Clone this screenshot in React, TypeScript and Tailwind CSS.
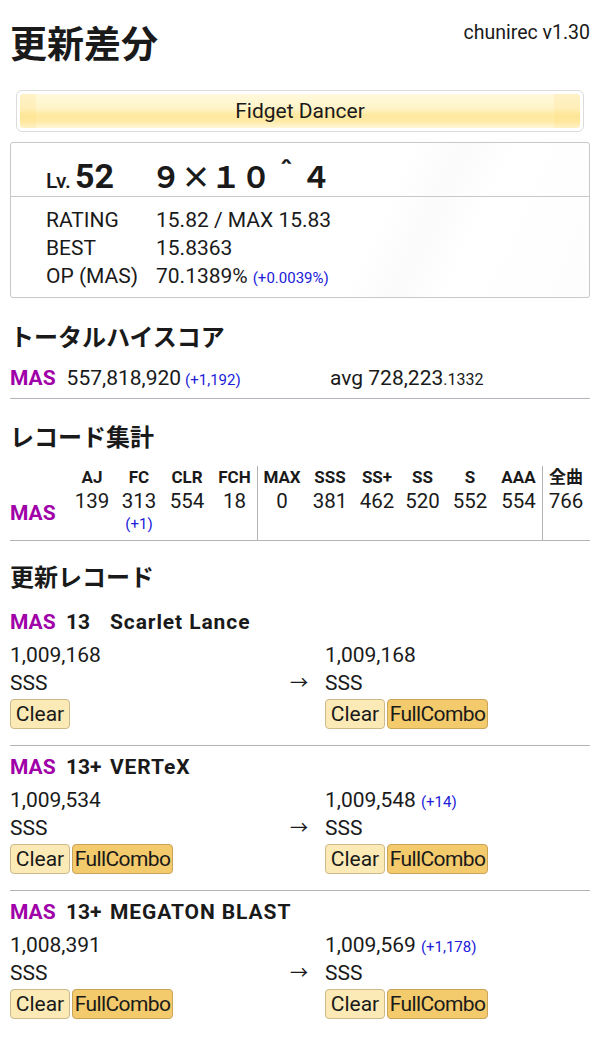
const MAS = "text-[#a000a8]";
const BLUE = "text-[#2020d8]";

function Badge({ kind }: { kind: "Clear" | "FullCombo" }) {
  if (kind === "Clear") {
    return (
      <span className="inline-flex h-[30px] w-[60px] items-center justify-center rounded-[4px] border border-[#cdb98a] bg-[#fbeab6] text-[21px] leading-none">
        Clear
      </span>
    );
  }
  return (
    <span className="inline-flex h-[30px] w-[101px] items-center justify-center rounded-[4px] border border-[#c9a459] bg-[#f3ca6c] text-[21px] leading-none tracking-[-0.6px]">
      FullCombo
    </span>
  );
}

type Rec = {
  lv: string;
  title: string;
  before: string;
  after: string;
  diff?: string;
  beforeBadges: ("Clear" | "FullCombo")[];
  afterBadges: ("Clear" | "FullCombo")[];
};

const records: Rec[] = [
  {
    lv: "13",
    title: "Scarlet Lance",
    before: "1,009,168",
    after: "1,009,168",
    beforeBadges: ["Clear"],
    afterBadges: ["Clear", "FullCombo"],
  },
  {
    lv: "13+",
    title: "VERTeX",
    before: "1,009,534",
    after: "1,009,548",
    diff: "(+14)",
    beforeBadges: ["Clear", "FullCombo"],
    afterBadges: ["Clear", "FullCombo"],
  },
  {
    lv: "13+",
    title: "MEGATON BLAST",
    before: "1,008,391",
    after: "1,009,569",
    diff: "(+1,178)",
    beforeBadges: ["Clear", "FullCombo"],
    afterBadges: ["Clear", "FullCombo"],
  },
];

const cols: { h: string; v: string; sub?: string; w: string; border?: boolean }[] = [
  { h: "AJ", v: "139", w: "w-[48px]" },
  { h: "FC", v: "313", sub: "(+1)", w: "w-[46px]" },
  { h: "CLR", v: "554", w: "w-[50px]" },
  { h: "FCH", v: "18", w: "w-[45px]" },
  { h: "MAX", v: "0", w: "w-[49px]", border: true },
  { h: "SSS", v: "381", w: "w-[48px]" },
  { h: "SS+", v: "462", w: "w-[46px]" },
  { h: "SS", v: "520", w: "w-[45px]" },
  { h: "S", v: "552", w: "w-[50px]" },
  { h: "AAA", v: "554", w: "w-[47px]" },
  { h: "全曲", v: "766", w: "w-[47px]", border: true },
];

export default function App() {
  return (
    <div className="min-h-[1037px] w-[600px] bg-white px-[10px] font-['Roboto','Noto_Sans_CJK_JP',sans-serif] text-[#1a1a1a]">
      <header className="flex items-start justify-between pt-[18px]">
        <h1 className="font-['Noto_Sans_CJK_JP',sans-serif] text-[37px] font-bold leading-[48px]">更新差分</h1>
        <div className="mt-[3px] text-[19.5px] leading-[24px]">chunirec v1.30</div>
      </header>

      <div className="mx-[6px] mt-[24px] rounded-[6px] border border-[#dcdcdc] bg-white p-[3px]">
        <div className="flex h-[34px] items-center justify-center rounded-[3px] bg-[linear-gradient(to_right,rgba(255,214,110,0.18)_0,rgba(255,214,110,0.18)_16px,transparent_16px,transparent_calc(100%_-_26px),rgba(255,214,110,0.18)_calc(100%_-_26px)),linear-gradient(to_bottom,#fff8dc_0%,#fff4c8_42%,#ffe9a0_62%,#ffeaa6_80%,#fff7d8_100%)] pt-[2px] text-[21px]">
          Fidget Dancer
        </div>
      </div>

      <div className="mt-[10px] rounded-[3px] border border-[#c8c8c8] bg-[linear-gradient(115deg,#ffffff_0%,#ffffff_62%,#fbfbfb_70%,#ffffff_78%,#fdfdfd_100%)]">
        <div className="flex h-[54px] items-baseline border-b border-[#c8c8c8] pl-[35px] pt-[12px]">
          <span className="text-[21px] font-medium">Lv.</span>
          <span className="ml-[4px] text-[34px] font-bold leading-[40px]">52</span>
          <span className="ml-[37px] font-['Noto_Sans_CJK_JP',sans-serif] text-[30px] font-bold leading-[40px]">９×１０＾４</span>
        </div>
        <div className="pb-[5px] pl-[35px] pt-[9px] text-[21px] leading-[28px]">
          <div className="flex">
            <span className="w-[110px]">RATING</span>
            <span>15.82 / MAX 15.83</span>
          </div>
          <div className="flex">
            <span className="w-[110px]">BEST</span>
            <span>15.8363</span>
          </div>
          <div className="flex items-baseline">
            <span className="w-[110px]">OP (MAS)</span>
            <span>70.1389%</span>
            <span className={`ml-[5px] text-[15px] ${BLUE}`}>(+0.0039%)</span>
          </div>
        </div>
      </div>

      <h2 className="mt-[22px] font-['Noto_Sans_CJK_JP',sans-serif] text-[24px] font-bold leading-[32px]">トータルハイスコア</h2>
      <div className="mt-[12px] grid grid-cols-[320px_1fr] border-b border-[#b4b4bc] pb-[4px] text-[21px] leading-[28px]">
        <div className="flex items-baseline">
          <span className={`font-bold ${MAS}`}>MAS</span>
          <span className="ml-[11px]">557,818,920</span>
          <span className={`ml-[4px] text-[15px] ${BLUE}`}>(+1,192)</span>
        </div>
        <div className="flex items-baseline">
          <span>avg 728,223</span>
          <span className="text-[16px]">.1332</span>
        </div>
      </div>

      <h2 className="mt-[21px] font-['Noto_Sans_CJK_JP',sans-serif] text-[24px] font-bold leading-[32px]">レコード集計</h2>
      <div className="mt-[14px] flex border-b border-[#b4b4b4]">
        <div className={`w-[58px] pt-[33px] text-[21px] font-bold leading-[28px] ${MAS}`}>MAS</div>
        {cols.map((c) => (
          <div
            key={c.h}
            className={`${c.w} flex flex-col items-center pb-[6px] ${c.border ? "border-l border-[#b4b4b4]" : ""}`}
          >
            <div className="h-[22px] text-[17px] font-bold leading-[22px]">{c.h}</div>
            <div className="h-[26px] text-[20.5px] leading-[26px]">{c.v}</div>
            <div className={`h-[20px] text-[15px] leading-[20px] ${BLUE}`}>{c.sub ?? ""}</div>
          </div>
        ))}
      </div>

      <h2 className="mb-[9px] mt-[19px] font-['Noto_Sans_CJK_JP',sans-serif] text-[24px] font-bold leading-[32px]">更新レコード</h2>
      {records.map((r, i) => (
        <div
          key={r.title}
          className={`pt-[7px] ${i < records.length - 1 ? "border-b border-[#b4b4b4] pb-[16px]" : "pb-[10px]"}`}
        >
          <div className="flex h-[28px] items-baseline text-[21px] font-bold leading-[28px]">
            <span className={`w-[56px] ${MAS}`}>MAS</span>
            <span className="w-[44px]">{r.lv}</span>
            <span className="tracking-[0.9px]">{r.title}</span>
          </div>
          <div className="mt-[5px] grid grid-cols-[280px_35px_1fr] text-[21px] leading-[28px]">
            <div className="flex flex-col">
              <div className="h-[28px]">{r.before}</div>
              <div className="h-[28px]">SSS</div>
              <div className="mt-[2px] flex gap-[2px]">
                {r.beforeBadges.map((b) => (
                  <Badge key={b} kind={b} />
                ))}
              </div>
            </div>
            <div className="flex flex-col">
              <div className="h-[28px]" />
              <div className="h-[28px] text-[18px]">→</div>
            </div>
            <div className="flex flex-col">
              <div className="flex h-[28px] items-baseline">
                <span>{r.after}</span>
                {r.diff && <span className={`ml-[5px] text-[15px] ${BLUE}`}>{r.diff}</span>}
              </div>
              <div className="h-[28px]">SSS</div>
              <div className="mt-[2px] flex gap-[2px]">
                {r.afterBadges.map((b) => (
                  <Badge key={b} kind={b} />
                ))}
              </div>
            </div>
          </div>
        </div>
      ))}
    </div>
  );
}
